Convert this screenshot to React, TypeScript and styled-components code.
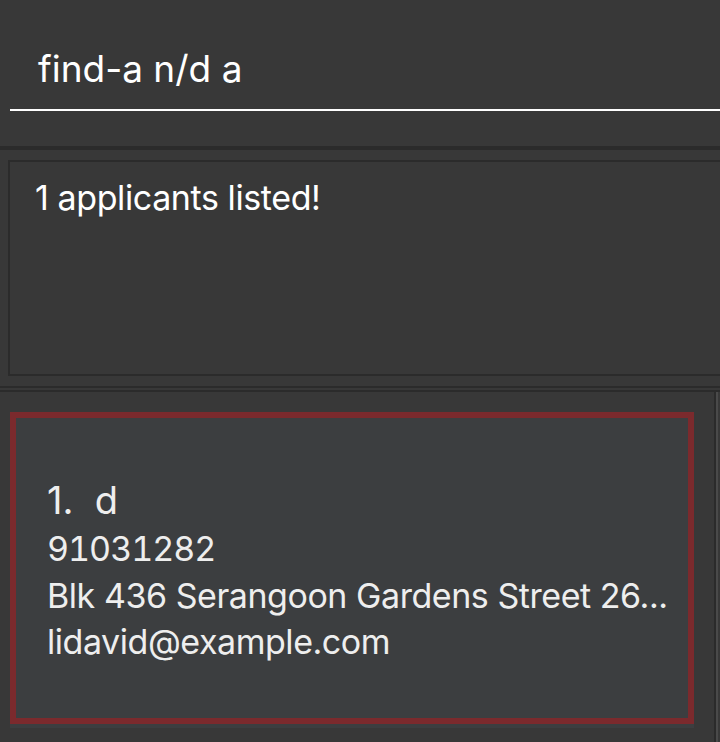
import React from "react";
import styled, { createGlobalStyle } from "styled-components";

const Global = createGlobalStyle`
  html, body { margin: 0; padding: 0; }
  body {
    background: #383838;
    font-family: Inter, "Open Sans", "Liberation Sans", sans-serif;
    overflow: hidden;
  }
`;

const Page = styled.div`
  width: 720px;
  height: 742px;
  background: #383838;
  display: flex;
  flex-direction: column;
  overflow: hidden;
`;

const CommandArea = styled.div`
  height: 146px;
  padding-left: 10px;
  box-sizing: border-box;
`;

const CommandField = styled.div`
  height: 111px;
  box-sizing: border-box;
  border-bottom: 2px solid #ffffff;
  padding: 47px 0 0 28px;
  color: #ffffff;
  font-size: 37px;
  line-height: 44px;
  letter-spacing: 0px;
`;

const Separator = styled.div<{ $h: number }>`
  height: ${(p) => p.$h}px;
  background: #2b2b2b;
  flex: none;
`;

const ResultArea = styled.div`
  height: 236px;
  box-sizing: border-box;
  padding: 10px 0 10px 8px;
  overflow: hidden;
`;

const ResultBox = styled.div`
  height: 216px;
  width: 740px;
  box-sizing: border-box;
  border: 2px solid #2b2b2b;
  padding: 14px 0 0 25px;
  color: #ffffff;
  font-size: 34px;
  line-height: 44px;
  letter-spacing: -0.4px;
`;

const Divider = styled.div`
  height: 6px;
  box-sizing: border-box;
  border-top: 2px solid #2b2b2b;
  border-bottom: 2px solid #2b2b2b;
  flex: none;
`;

const ListArea = styled.div`
  flex: 1;
  display: flex;
  min-height: 0;
`;

const ListView = styled.div`
  width: 716px;
  box-sizing: border-box;
  border-right: 2px solid #2b2b2b;
  padding: 20px 0 0 10px;
`;

const ScrollStrip = styled.div`
  width: 2px;
  background: #4a4a4a;
`;

const CellBg = styled.div`
  width: 684px;
  background: #3c3e40;
  padding-bottom: 4px;
`;

const Card = styled.div`
  height: 312px;
  box-sizing: border-box;
  border: 6px solid #7b2a2d;
  padding: 57px 0 0 31px;
  display: flex;
  flex-direction: column;
  color: #eeeeee;
`;

const NameRow = styled.div`
  font-size: 38px;
  line-height: 50px;
  white-space: pre;
`;

const DetailRow = styled.div<{ $lh?: number; $tnum?: boolean }>`
  font-size: 34px;
  line-height: ${(p) => p.$lh ?? 46}px;
  letter-spacing: ${(p) => (p.$tnum ? "-1px" : "-0.45px")};
  white-space: nowrap;
  font-feature-settings: ${(p) => (p.$tnum ? '"tnum"' : "normal")};
`;

export default function App() {
  return (
    <Page>
      <Global />
      <CommandArea>
        <CommandField>find-a n/d a</CommandField>
      </CommandArea>
      <Separator $h={4} />
      <ResultArea>
        <ResultBox>1 applicants listed!</ResultBox>
      </ResultArea>
      <Divider />
      <ListArea>
        <ListView>
          <CellBg>
            <Card>
              <NameRow>{"1.  d"}</NameRow>
              <DetailRow $lh={48} $tnum>91031282</DetailRow>
              <DetailRow>Blk 436 Serangoon Gardens Street 26...</DetailRow>
              <DetailRow>lidavid@example.com</DetailRow>
            </Card>
          </CellBg>
        </ListView>
        <ScrollStrip />
      </ListArea>
    </Page>
  );
}
